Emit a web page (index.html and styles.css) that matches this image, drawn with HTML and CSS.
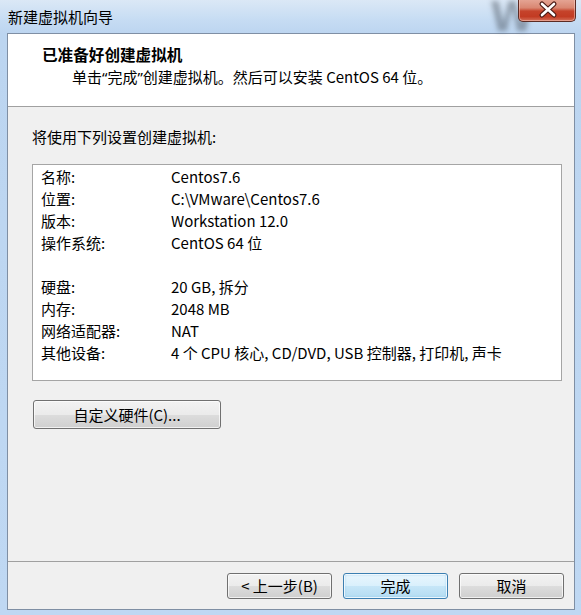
FILE: index.html
```html
<!DOCTYPE html>
<html lang="zh-CN">
<head>
<meta charset="utf-8">
<title>新建虚拟机向导</title>
<link rel="stylesheet" href="styles.css">
</head>
<body>
<div class="window">
  <div class="titlebar">
    <span class="title">新建虚拟机向导</span>
    <span class="ghost">W</span>
    <div class="close">
      <svg width="58" height="22" viewBox="0 0 58 22">
        <path d="M23 5 L35 16 M35 5 L23 16" stroke="#4a1a14" stroke-width="5" stroke-linecap="round"/>
        <path d="M23 5 L35 16 M35 5 L23 16" stroke="#ffffff" stroke-width="2.6" stroke-linecap="round"/>
      </svg>
    </div>
  </div>
  <div class="client">
    <div class="header">
      <div class="h-title">已准备好创建虚拟机</div>
      <div class="h-sub">单击<span class="q">“</span>完成<span class="q">”</span>创建虚拟机。然后可以安装 CentOS 64 位。</div>
    </div>
    <div class="body">
      <div class="intro">将使用下列设置创建虚拟机:</div>
      <div class="listbox">
        <div class="row"><span class="k">名称:</span><span class="v">Centos7.6</span></div>
        <div class="row"><span class="k">位置:</span><span class="v">C:\VMware\Centos7.6</span></div>
        <div class="row"><span class="k">版本:</span><span class="v">Workstation 12.0</span></div>
        <div class="row"><span class="k">操作系统:</span><span class="v">CentOS 64 位</span></div>
        <div class="row"></div>
        <div class="row"><span class="k">硬盘:</span><span class="v">20 GB, 拆分</span></div>
        <div class="row"><span class="k">内存:</span><span class="v">2048 MB</span></div>
        <div class="row"><span class="k">网络适配器:</span><span class="v">NAT</span></div>
        <div class="row"><span class="k">其他设备:</span><span class="v">4 个 CPU 核心, CD/DVD, USB 控制器, 打印机, 声卡</span></div>
      </div>
      <button class="btn btn-custom">自定义硬件(C)...</button>
    </div>
    <div class="footer">
      <button class="btn">&lt;&nbsp;上一步(B)</button>
      <button class="btn btn-default">完成</button>
      <button class="btn">取消</button>
    </div>
  </div>
</div>
</body>
</html>
```
FILE: styles.css
```css
html, body {
  margin: 0;
  padding: 0;
}
body {
  width: 581px;
  height: 615px;
  overflow: hidden;
  font-family: "Noto Sans CJK SC", "Noto Sans", sans-serif;
  font-size: 15px;
  color: #000;
}
.window {
  width: 581px;
  height: 615px;
  background: linear-gradient(to bottom, #dbe8f6 0px, #c6dcf3 20px, #bcd5f0 34px, #bfd8f3 100%);
  display: flex;
  flex-direction: column;
  box-sizing: border-box;
  padding: 0 6px 5px 7px;
}
.titlebar {
  position: relative;
  height: 33px;
  flex: none;
  display: flex;
  align-items: center;
  padding-left: 1px;
}
.title {
  font-size: 15px;
  line-height: 20px;
  margin-top: 1px;
  position: relative;
  z-index: 2;
}
.ghost {
  position: absolute;
  left: 483px;
  top: -6px;
  font-family: "DejaVu Sans", sans-serif;
  font-weight: bold;
  font-size: 40px;
  color: rgba(70, 80, 90, 0.45);
  filter: blur(2.5px);
  z-index: 1;
}
.close {
  position: absolute;
  left: 511px;
  top: -1px;
  width: 58px;
  height: 23px;
  box-sizing: border-box;
  border: 1px solid #5c2b24;
  border-top: none;
  border-radius: 0 0 5px 5px;
  background: linear-gradient(to bottom, #e6a797 0%, #d98772 40%, #c5432b 55%, #c23b23 80%, #d4705a 100%);
  box-shadow: inset 0 0 0 1px rgba(255, 220, 210, 0.45);
  z-index: 3;
}
.close svg {
  display: block;
}
.client {
  flex: 1;
  display: flex;
  flex-direction: column;
  border: 1px solid #7f8fa4;
  background: #f0f0f0;
}
.header {
  background: #fff;
  height: 73px;
  box-sizing: border-box;
  border-bottom: 1px solid #a0a0a0;
  padding: 9px 0 0 34px;
}
.h-title {
  font-weight: bold;
  font-size: 15.6px;
  line-height: 22px;
}
.h-sub {
  padding-left: 30px;
  line-height: 22px;
  margin-top: 1px;
}
.q {
  font-family: "Noto Sans", sans-serif;
}
.body {
  flex: 1;
  padding: 19px 12px 0 24px;
}
.intro {
  line-height: 22px;
}
.listbox {
  margin-top: 16px;
  background: #fff;
  border: 1px solid #a5a5a5;
  height: 217px;
  box-sizing: border-box;
  padding: 1px 8px 0 8px;
}
.row {
  height: 22px;
  line-height: 22px;
  display: flex;
  white-space: nowrap;
}
.k {
  width: 130px;
  flex: none;
}
.btn {
  font-family: "Noto Sans CJK SC", "Noto Sans", sans-serif;
  font-size: 15px;
  color: #000;
  height: 26px;
  padding: 0;
  border: 1px solid #707070;
  border-radius: 3px;
  background: linear-gradient(to bottom, #f2f2f2 0%, #ebebeb 50%, #dddddd 50%, #cfcfcf 100%);
  box-shadow: inset 0 0 0 1px rgba(255, 255, 255, 0.7);
  line-height: 22px;
}
.btn-custom {
  display: block;
  margin-top: 19px;
  margin-left: 1px;
  width: 188px;
  height: 29px;
}
.footer {
  height: 48px;
  box-sizing: border-box;
  border-top: 1px solid #a0a0a0;
  display: flex;
  justify-content: flex-end;
  align-items: flex-start;
  gap: 11px;
  padding: 11px 10px 0 0;
}
.footer .btn {
  width: 105px;
}
.btn-default {
  border-color: #3c7fb1;
  background: linear-gradient(to bottom, #eaf6fd 0%, #d9f0fc 50%, #c6e6f8 50%, #b4dcf2 100%);
  box-shadow: inset 0 0 0 1px rgba(255, 255, 255, 0.8), inset 0 0 2px 1px rgba(120, 190, 235, 0.6);
}
```
